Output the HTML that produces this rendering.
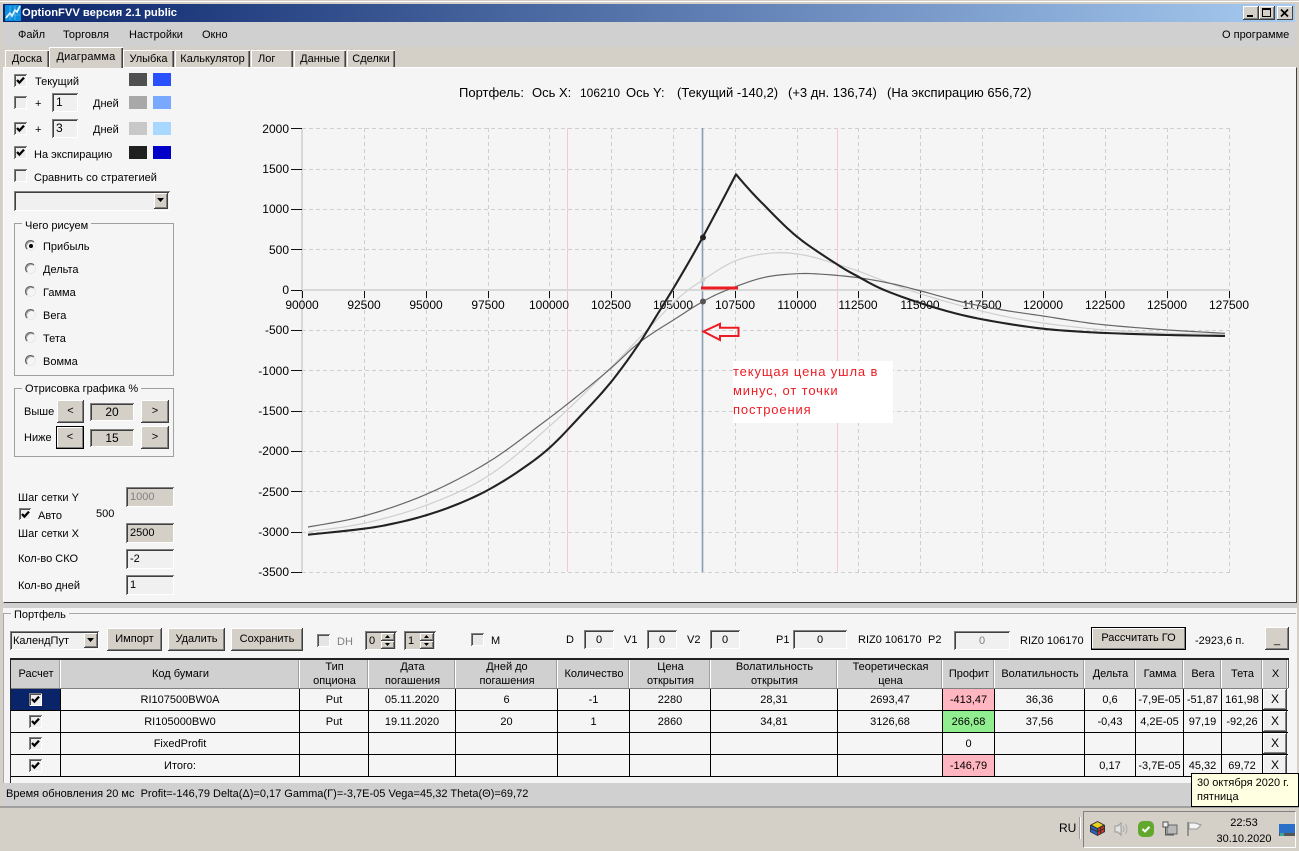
<!DOCTYPE html>
<html lang="ru"><head><meta charset="utf-8"><title>OptionFVV</title>
<style>
html,body{margin:0;padding:0;width:1299px;height:851px;overflow:hidden;background:#d4d0c8}
body{position:relative;font:11px/14px "Liberation Sans","DejaVu Sans",sans-serif;color:#000}
div{box-sizing:border-box}
.a,.t,.b,.s,.c,.r,.sw{position:absolute}
.t{white-space:nowrap;height:14px}
.cn{text-align:center}
.b{background:#d4d0c8;box-shadow:inset -1px -1px #404040,inset 1px 1px #fff,inset -2px -2px #808080;text-align:center;white-space:nowrap}
.d{box-shadow:inset 0 0 0 1px #000,inset -2px -2px #808080,inset 2px 2px #fff}
.s{box-shadow:inset 1px 1px #808080,inset -1px -1px #fff,inset 2px 2px #404040;background:#f0f0f0;text-align:center;white-space:nowrap}
.g{background:#d4d0c8}
.c{width:13px;height:13px;background:#eeeeee;box-shadow:inset 1px 1px #808080,inset -1px -1px #fff,inset 2px 2px #505050}
.c svg{position:absolute;left:2px;top:2px}
.r{width:11px;height:11px;left:25px;border-radius:50%;background:#f5f5f5;border:1px solid;border-color:#606060 #e8e8e8 #e8e8e8 #606060;box-shadow:inset 1px 1px #a0a0a0}
.sw{width:18px;height:13px}
.gb{position:absolute;border:1px solid #a0a0a0}
.lg{position:absolute;background:#f5f5f5;padding:0 3px;height:14px;white-space:nowrap}
.tab{position:absolute;top:50px;height:17px;background:#d4d0c8;text-align:center;line-height:19px;box-shadow:inset 1px 1px #fff,inset -1px 0 #404040,inset -2px 0 #808080;white-space:nowrap}
table{position:absolute;left:11px;top:660px;border-collapse:separate;border-spacing:0;table-layout:fixed;width:1277px;background:#f5f5f5}
th{font-weight:normal;background:#d0d0d0;height:29px;padding:1px 0 0;line-height:13.5px;border-bottom:1px solid #808080;box-shadow:inset -1px 0 #fff,inset -2px 0 #a0a0a0;box-sizing:border-box}
td{height:22px;padding:1px 0 0;text-align:center;border-right:1px solid #000;border-bottom:1px solid #000;box-sizing:border-box;white-space:nowrap;overflow:hidden}
.p{background:#ffb6c1}.e{background:#90ee90}
.cl{font:13px/14px "Liberation Sans",sans-serif}
.x{font-size:12px;line-height:21px;background:#f0f0f0}
</style></head>
<body>
<svg width="0" height="0" style="position:absolute"><defs><symbol id="ck" viewBox="0 0 9 9"><path d="M1 4 L3.4 6.6 L8 1.6" fill="none" stroke="#000" stroke-width="2.3"/></symbol></defs></svg>

<!-- window frame -->
<div class="a" style="left:0;top:1px;width:1299px;height:1px;background:#fff"></div>
<div class="a" style="left:3px;top:4px;width:1292px;height:18px;background:linear-gradient(90deg,#0a246a,#a6caf0)"></div>
<svg class="a" style="left:5px;top:5px" width="16" height="16"><rect width="16" height="16" fill="#0a8ee0"/><path d="M1 13 L5 8 L7 11 L10 5 L12 7 L15 1" fill="none" stroke="#fff" stroke-width="1.6"/><path d="M1 10H15M5 1V15M10 1V15" stroke="#7fc8f0" stroke-width=".6"/></svg>
<div class="t" style="left:22px;top:6px;color:#fff;font-weight:bold;font-size:11.2px">OptionFVV версия 2.1 public</div>
<div class="b" style="left:1243px;top:6px;width:16px;height:14px"><div class="a" style="left:4px;top:9px;width:6px;height:2px;background:#000"></div></div>
<div class="b" style="left:1259px;top:6px;width:16px;height:14px"><div class="a" style="left:3px;top:2px;width:9px;height:9px;border:1px solid #000;border-top-width:2px"></div></div>
<svg class="a" style="left:1277px;top:6px;box-shadow:inset -1px -1px #404040,inset 1px 1px #fff;background:#d4d0c8" width="16" height="14"><path d="M4 3.5L11 10.5M11 3.5L4 10.5" stroke="#000" stroke-width="1.7"/></svg>

<!-- menu -->
<div class="a" style="left:3px;top:22px;width:1292px;height:25px;background:#d0d0d0"></div>
<div class="t" style="left:18px;top:28px">Файл</div>
<div class="t" style="left:63px;top:28px">Торговля</div>
<div class="t" style="left:129px;top:28px">Настройки</div>
<div class="t" style="left:202px;top:28px">Окно</div>
<div class="t" style="left:1222px;top:28px">О программе</div>

<!-- tabs -->
<div class="tab" style="left:5px;width:44px">Доска</div>
<div class="tab" style="left:123px;width:51px">Улыбка</div>
<div class="tab" style="left:175px;width:75px">Калькулятор</div>
<div class="tab" style="left:251px;width:42px;text-align:left;padding-left:7px">Лог</div>
<div class="tab" style="left:294px;width:52px">Данные</div>
<div class="tab" style="left:347px;width:48px">Сделки</div>

<!-- chart panel -->
<div class="a" style="left:3px;top:67px;width:1294px;height:536px;background:#f5f5f5;border-top:1px solid #fff;border-left:1px solid #fff;border-right:1px solid #404040;border-bottom:1px solid #404040"></div>
<div class="tab" style="left:49px;top:47px;width:74px;height:21px;line-height:21px;background:#d4d0c8;letter-spacing:.2px">Диаграмма</div>
<div class="a" style="left:3px;top:603px;width:1294px;height:5px;background:#d0d0d0"></div>

<!-- left controls -->
<div class="c" style="left:14px;top:74px"><svg width="9" height="9"><use href="#ck"/></svg></div>
<div class="t" style="left:35px;top:75px">Текущий</div>
<div class="sw" style="left:129px;top:73px;background:#505050"></div><div class="sw" style="left:153px;top:73px;background:#2850ff"></div>

<div class="c" style="left:14px;top:96px"></div>
<div class="t" style="left:35px;top:97px">+</div>
<div class="s" style="left:52px;top:93px;width:26px;height:19px;text-align:left;padding:3px 0 0 4px;line-height:13px;font-size:12px">1</div>
<div class="t" style="left:93px;top:97px">Дней</div>
<div class="sw" style="left:129px;top:96px;background:#a8a8a8"></div><div class="sw" style="left:153px;top:96px;background:#78a8ff"></div>

<div class="c" style="left:14px;top:122px"><svg width="9" height="9"><use href="#ck"/></svg></div>
<div class="t" style="left:35px;top:123px">+</div>
<div class="s" style="left:52px;top:119px;width:26px;height:19px;text-align:left;padding:3px 0 0 4px;line-height:13px;font-size:12px">3</div>
<div class="t" style="left:93px;top:123px">Дней</div>
<div class="sw" style="left:129px;top:122px;background:#c8c8c8"></div><div class="sw" style="left:153px;top:122px;background:#a8d8ff"></div>

<div class="c" style="left:14px;top:146px"><svg width="9" height="9"><use href="#ck"/></svg></div>
<div class="t" style="left:34px;top:148px">На экспирацию</div>
<div class="sw" style="left:129px;top:146px;background:#202020"></div><div class="sw" style="left:153px;top:146px;background:#0000c8"></div>

<div class="c" style="left:14px;top:169px"></div>
<div class="t" style="left:34px;top:171px">Сравнить со стратегией</div>

<div class="s" style="left:14px;top:191px;width:156px;height:20px"></div>
<div class="b" style="left:154px;top:193px;width:14px;height:16px"><svg class="a" style="left:3px;top:5px" width="8" height="5"><path d="M0 0H7L3.5 4Z" fill="#000"/></svg></div>

<div class="gb" style="left:14px;top:223px;width:160px;height:153px"></div>
<div class="lg" style="left:22px;top:219px">Чего рисуем</div>
<div class="r" style="top:240px"><div class="a" style="left:3px;top:3px;width:4px;height:4px;border-radius:50%;background:#000"></div></div><div class="t" style="left:43px;top:240px">Прибыль</div>
<div class="r" style="top:263px"></div><div class="t" style="left:43px;top:263px">Дельта</div>
<div class="r" style="top:286px"></div><div class="t" style="left:43px;top:286px">Гамма</div>
<div class="r" style="top:309px"></div><div class="t" style="left:43px;top:309px">Вега</div>
<div class="r" style="top:332px"></div><div class="t" style="left:43px;top:332px">Тета</div>
<div class="r" style="top:355px"></div><div class="t" style="left:43px;top:355px">Вомма</div>

<div class="gb" style="left:14px;top:388px;width:160px;height:69px"></div>
<div class="lg" style="left:22px;top:382px">Отрисовка графика %</div>
<div class="t" style="left:24px;top:405px">Выше</div>
<div class="b" style="left:57px;top:400px;width:27px;height:23px;line-height:23px">&lt;</div>
<div class="s g" style="left:90px;top:403px;width:44px;height:18px;line-height:18px;font-size:12px">20</div>
<div class="b" style="left:141px;top:400px;width:28px;height:23px;line-height:23px">&gt;</div>
<div class="t" style="left:24px;top:431px">Ниже</div>
<div class="b d" style="left:56px;top:426px;width:28px;height:23px;line-height:23px">&lt;</div>
<div class="s g" style="left:90px;top:429px;width:44px;height:18px;line-height:18px;font-size:12px">15</div>
<div class="b" style="left:141px;top:426px;width:28px;height:23px;line-height:23px">&gt;</div>

<div class="t" style="left:18px;top:491px">Шаг сетки Y</div>
<div class="s g" style="left:126px;top:487px;width:48px;height:20px;text-align:left;padding:3px 0 0 4px;line-height:14px;color:#808080">1000</div>
<div class="c" style="left:19px;top:508px;width:12px;height:12px"><svg width="9" height="9"><use href="#ck"/></svg></div>
<div class="t" style="left:38px;top:509px">Авто</div>
<div class="t" style="left:96px;top:507px">500</div>
<div class="t" style="left:18px;top:527px">Шаг сетки X</div>
<div class="s g" style="left:126px;top:523px;width:48px;height:20px;text-align:left;padding:3px 0 0 4px;line-height:14px">2500</div>
<div class="t" style="left:18px;top:552px">Кол-во СКО</div>
<div class="s" style="left:126px;top:549px;width:48px;height:20px;text-align:left;padding:3px 0 0 4px;line-height:14px">-2</div>
<div class="t" style="left:18px;top:579px">Кол-во дней</div>
<div class="s" style="left:126px;top:575px;width:48px;height:20px;text-align:left;padding:3px 0 0 4px;line-height:14px">1</div>

<!-- chart -->
<div class="t cl" style="left:459px;top:86px">Портфель:</div>
<div class="t cl" style="left:532px;top:86px">Ось X:</div>
<div class="t cl" style="left:580px;top:86px;font-size:12px">106210</div>
<div class="t cl" style="left:626px;top:86px">Ось Y:</div>
<div class="t cl" style="left:677px;top:86px">(Текущий -140,2)</div>
<div class="t cl" style="left:788px;top:86px">(+3 дн. 136,74)</div>
<div class="t cl" style="left:887px;top:86px">(На экспирацию 656,72)</div>

<svg class="a" style="left:0;top:0" width="1299" height="600">
<g stroke="#cfcfcf" stroke-width="1" stroke-dasharray="4 3" fill="none">
<path d="M302 128.5H1230M302 169.5H1230M302 209.5H1230M302 249.5H1230M302 330.5H1230M302 370.5H1230M302 411.5H1230M302 451.5H1230M302 491.5H1230M302 532.5H1230M302 572.5H1230"/>
<path d="M364.5 128V572M426.5 128V572M488.5 128V572M549.5 128V572M611.5 128V572M673.5 128V572M735.5 128V572M797.5 128V572M858.5 128V572M920.5 128V572M982.5 128V572M1043.5 128V572M1105.5 128V572M1167.5 128V572M1229.5 128V572"/>
</g>
<path d="M567.5 128V572M837.5 128V572" stroke="#f7c6d0" stroke-width="1"/>
<path d="M702.5 128V572" stroke="#8a9cb2" stroke-width="1.6"/>
<path d="M302 128V572" stroke="#d8d8d8" stroke-width="2"/>
<path d="M302 290H1230" stroke="#d8d8d8" stroke-width="2"/>
<path d="M291 128.5H302M291 169.5H302M291 209.5H302M291 249.5H302M291 290.5H302M291 330.5H302M291 370.5H302M291 411.5H302M291 451.5H302M291 491.5H302M291 532.5H302M291 572.5H302" stroke="#111" stroke-width="1"/>
<path d="M302.5 291V298M364.5 291V298M426.5 291V298M488.5 291V298M549.5 291V298M611.5 291V298M673.5 291V298M735.5 291V298M797.5 291V298M858.5 291V298M920.5 291V298M982.5 291V298M1043.5 291V298M1105.5 291V298M1167.5 291V298M1229.5 291V298" stroke="#111" stroke-width="1"/>
<g font-family="Liberation Sans, sans-serif" font-size="12" text-anchor="middle" fill="#000">
<text x="302" y="309">90000</text><text x="364" y="309">92500</text><text x="426" y="309">95000</text><text x="488" y="309">97500</text><text x="549" y="309">100000</text><text x="611" y="309">102500</text><text x="673" y="309">105000</text><text x="735" y="309">107500</text><text x="797" y="309">110000</text><text x="858" y="309">112500</text><text x="920" y="309">115000</text><text x="982" y="309">117500</text><text x="1043" y="309">120000</text><text x="1105" y="309">122500</text><text x="1167" y="309">125000</text><text x="1229" y="309">127500</text>
</g>
<g font-family="Liberation Sans, sans-serif" font-size="12" text-anchor="end" fill="#000">
<text x="289" y="133">2000</text><text x="289" y="173">1500</text><text x="289" y="213">1000</text><text x="289" y="254">500</text><text x="289" y="294">0</text><text x="289" y="334">-500</text><text x="289" y="375">-1000</text><text x="289" y="415">-1500</text><text x="289" y="455">-2000</text><text x="289" y="496">-2500</text><text x="289" y="536">-3000</text><text x="289" y="576">-3500</text>
</g>
<g fill="none" stroke-linejoin="round">
<polyline stroke="#cfcfcf" stroke-width="1.2" points="308,531.7 364,523.3 427,505 488,476 549,426.7 610,368.3 647,330 680,296.7 703,280 730,263.3 753,255.7 780,252.7 807,255.7 837,264.3 858,271 890,283.3 921,294 962,306 1003,316 1043,323 1075,327 1106,330 1168,333.3 1225,334.3"/>
<polyline stroke="#666" stroke-width="1.2" points="308,527 364,516 427,494 488,462.3 540,425 575,398 610,369 640,342 675,319 703,301.5 727,290 763,277.7 797,273.7 823,274.3 858,277.7 890,283.3 921,291 962,302 1003,310 1043,316 1075,321 1106,325 1168,330 1225,333.3"/>
<polyline stroke="#222" stroke-width="2.1" points="308,534.7 364,528.7 396,523 427,515 458,504 488,490 519,471 549,448.3 580,416.5 610,383.3 637,346.7 657,315 673,289 690,260 703,236.7 720,205 736,174.3 736,174.3 746.7,186.7 763.3,204.3 797,236.7 837,264.3 858.3,276.7 883,289.5 921,303.3 962,315 1003,323 1043,328.7 1075,331.3 1106,333 1168,335 1225,336"/>
</g>
<circle cx="703" cy="237.5" r="3" fill="#222"/>
<circle cx="703" cy="279.5" r="2.5" fill="#cfcfcf"/>
<circle cx="703" cy="301.5" r="3" fill="#555"/>
<path d="M701 288H738" stroke="#ed1c24" stroke-width="3"/>
<path d="M703.5 331.5L720 323.8V327.8H738.5V336H720V340Z" fill="none" stroke="#ed1c24" stroke-width="2"/>
</svg>
<script>
document.querySelectorAll('polyline').forEach(function(pl){
var p=pl.getAttribute('points').trim().split(/\s+/).map(function(s){return s.split(',').map(Number)}),o=[];
for(var i=0;i<p.length-1;i++){var a=p[Math.max(i-1,0)],b=p[i],c=p[i+1],d=p[Math.min(i+2,p.length-1)];
if(b[0]===c[0]&&b[1]===c[1])continue;
for(var k=0;k<8;k++){var t=k/8,t2=t*t,t3=t2*t,q=[0,1].map(function(j){return (0.5*(2*b[j]+(c[j]-a[j])*t+(2*a[j]-5*b[j]+4*c[j]-d[j])*t2+(3*b[j]-a[j]-3*c[j]+d[j])*t3)).toFixed(2)});o.push(q.join(','))}}
o.push(p[p.length-1].join(','));pl.setAttribute('points',o.join(' '))});
</script>

<div class="a" style="left:733px;top:361px;width:160px;height:62px;background:#fff"></div>
<div class="t" style="left:733px;top:365px;color:#ed1c24;font-size:13px;letter-spacing:.87px">текущая цена ушла в</div>
<div class="t" style="left:733px;top:384px;color:#ed1c24;font-size:13px;letter-spacing:.87px">минус, от точки</div>
<div class="t" style="left:733px;top:403px;color:#ed1c24;font-size:13px;letter-spacing:.87px">построения</div>

<!-- portfolio -->
<div class="a" style="left:3px;top:608px;width:1294px;height:175px;background:#f5f5f5"></div>
<div class="a" style="left:3px;top:613px;width:1293px;height:1px;background:#a8a8a8"></div>
<div class="a" style="left:3px;top:613px;width:1px;height:170px;background:#a8a8a8"></div>
<div class="lg" style="left:11px;top:608px;padding:0 3px">Портфель</div>

<div class="s" style="left:10px;top:631px;width:89px;height:19px;text-align:left;padding:4px 0 0 3px;line-height:13px">КалендПут</div>
<div class="b" style="left:84px;top:633px;width:14px;height:15px"><svg class="a" style="left:3px;top:5px" width="8" height="5"><path d="M0 0H7L3.5 4Z" fill="#000"/></svg></div>
<div class="b" style="left:107px;top:628px;width:55px;height:23px;line-height:23px">Импорт</div>
<div class="b" style="left:168px;top:628px;width:57px;height:23px;line-height:23px">Удалить</div>
<div class="b" style="left:231px;top:628px;width:72px;height:23px;line-height:23px">Сохранить</div>
<div class="c" style="left:317px;top:634px;background:#e4e4e4"></div>
<div class="t" style="left:337px;top:635px;color:#808080">DH</div>
<div class="s g" style="left:365px;top:631px;width:32px;height:19px;text-align:left;padding:4px 0 0 4px;line-height:13px">0</div>
<div class="b" style="left:381px;top:633px;width:14px;height:8px"><svg class="a" style="left:4px;top:2px" width="6" height="4"><path d="M0 3H5L2.5 0Z"/></svg></div>
<div class="b" style="left:381px;top:641px;width:14px;height:8px"><svg class="a" style="left:4px;top:2px" width="6" height="4"><path d="M0 0H5L2.5 3Z"/></svg></div>
<div class="s g" style="left:404px;top:631px;width:32px;height:19px;text-align:left;padding:4px 0 0 4px;line-height:13px">1</div>
<div class="b" style="left:420px;top:633px;width:14px;height:8px"><svg class="a" style="left:4px;top:2px" width="6" height="4"><path d="M0 3H5L2.5 0Z"/></svg></div>
<div class="b" style="left:420px;top:641px;width:14px;height:8px"><svg class="a" style="left:4px;top:2px" width="6" height="4"><path d="M0 0H5L2.5 3Z"/></svg></div>
<div class="c" style="left:471px;top:633px;background:#e8e8e8"></div>
<div class="t" style="left:491px;top:634px">M</div>
<div class="t" style="left:566px;top:633px">D</div>
<div class="s" style="left:584px;top:630px;width:30px;height:19px;line-height:20px">0</div>
<div class="t" style="left:624px;top:633px">V1</div>
<div class="s" style="left:647px;top:630px;width:30px;height:19px;line-height:20px">0</div>
<div class="t" style="left:687px;top:633px">V2</div>
<div class="s" style="left:710px;top:630px;width:30px;height:19px;line-height:20px">0</div>
<div class="t" style="left:776px;top:633px">P1</div>
<div class="s" style="left:793px;top:630px;width:54px;height:19px;line-height:20px">0</div>
<div class="t" style="left:858px;top:633px">RIZ0 106170</div>
<div class="t" style="left:928px;top:633px">P2</div>
<div class="s" style="left:954px;top:631px;width:56px;height:19px;line-height:20px;color:#808080">0</div>
<div class="t" style="left:1020px;top:634px">RIZ0 106170</div>
<div class="b d" style="left:1091px;top:627px;width:95px;height:23px;line-height:23px">Рассчитать ГО</div>
<div class="t" style="left:1195px;top:634px">-2923,6 п.</div>
<div class="b" style="left:1265px;top:627px;width:24px;height:23px;line-height:26px">_</div>

<!-- table -->
<div class="a" style="left:10px;top:658px;width:1279px;height:2px;background:#222"></div>
<div class="a" style="left:10px;top:658px;width:1px;height:125px;background:#222"></div>
<table>
<colgroup><col style="width:50px"><col style="width:239px"><col style="width:69px"><col style="width:87px"><col style="width:102px"><col style="width:72px"><col style="width:81px"><col style="width:127px"><col style="width:105px"><col style="width:52px"><col style="width:90px"><col style="width:51px"><col style="width:48px"><col style="width:38px"><col style="width:41px"><col style="width:25px"></colgroup>
<tr><th>Расчет</th><th>Код бумаги</th><th>Тип<br>опциона</th><th>Дата<br>погашения</th><th>Дней до<br>погашения</th><th>Количество</th><th>Цена<br>открытия</th><th>Волатильность<br>открытия</th><th>Теоретическая<br>цена</th><th>Профит</th><th>Волатильность</th><th>Дельта</th><th>Гамма</th><th>Вега</th><th>Тета</th><th>X</th></tr>
<tr><td style="background:#0a246a"></td><td>RI107500BW0A</td><td>Put</td><td>05.11.2020</td><td>6</td><td>-1</td><td>2280</td><td>28,31</td><td>2693,47</td><td class="p">-413,47</td><td>36,36</td><td>0,6</td><td>-7,9E-05</td><td>-51,87</td><td>161,98</td><td style="border-right:0"></td></tr>
<tr><td></td><td>RI105000BW0</td><td>Put</td><td>19.11.2020</td><td>20</td><td>1</td><td>2860</td><td>34,81</td><td>3126,68</td><td class="e">266,68</td><td>37,56</td><td>-0,43</td><td>4,2E-05</td><td>97,19</td><td>-92,26</td><td style="border-right:0"></td></tr>
<tr><td></td><td>FixedProfit</td><td></td><td></td><td></td><td></td><td></td><td></td><td></td><td>0</td><td></td><td></td><td></td><td></td><td></td><td style="border-right:0"></td></tr>
<tr><td></td><td>Итого:</td><td></td><td></td><td></td><td></td><td></td><td></td><td></td><td class="p">-146,79</td><td></td><td>0,17</td><td>-3,7E-05</td><td>45,32</td><td>69,72</td><td style="border-right:0"></td></tr>
</table>
<div class="a" style="left:1288px;top:660px;width:1px;height:28px;background:#606060"></div>
<div class="c" style="left:29px;top:693px"><svg width="9" height="9"><use href="#ck"/></svg></div>
<div class="c" style="left:29px;top:715px"><svg width="9" height="9"><use href="#ck"/></svg></div>
<div class="c" style="left:29px;top:737px"><svg width="9" height="9"><use href="#ck"/></svg></div>
<div class="c" style="left:29px;top:759px"><svg width="9" height="9"><use href="#ck"/></svg></div>
<div class="b x" style="left:1263px;top:689px;width:24px;height:21px">X</div>
<div class="b x" style="left:1263px;top:711px;width:24px;height:21px">X</div>
<div class="b x" style="left:1263px;top:733px;width:24px;height:21px">X</div>
<div class="b x" style="left:1263px;top:755px;width:24px;height:21px">X</div>

<!-- status bar -->
<div class="a" style="left:3px;top:783px;width:1293px;height:23px;background:#d0d0d0"></div>
<div class="t" style="left:6px;top:787px">Время обновления 20 мс &nbsp;Profit=-146,79 Delta(Δ)=0,17 Gamma(Γ)=-3,7E-05 Vega=45,32 Theta(Θ)=69,72</div>
<div class="a" style="left:0;top:806px;width:1299px;height:2px;background:#a0a0a0"></div>

<!-- taskbar -->
<div class="t" style="left:1059px;top:821px;font-size:12px">RU</div>
<div class="a" style="left:1079px;top:817px;width:2px;height:22px;background:#a0a0a0;border-right:1px solid #fff"></div>
<div class="a" style="left:1083px;top:811px;width:213px;height:37px;border:1px solid;border-color:#808080 #fff #fff #808080"></div>
<svg class="a" style="left:1089px;top:820px" width="17" height="17"><path d="M8.5 1L16 5V12L8.5 16L1 12V5Z" fill="#333"/><path d="M8.5 2L14 5L8.5 8L3 5Z" fill="#e8d020"/><path d="M2 6L8 9V15L2 11.5Z" fill="#2a62c8"/><path d="M9 9L15 6V11.5L9 15Z" fill="#d03020"/><path d="M2 8.5L8 11.5" stroke="#333"/><path d="M9 11.5L15 8.5M11.5 8V14" stroke="#333"/></svg>
<svg class="a" style="left:1113px;top:821px" width="17" height="16"><path d="M2 5H5L8 2V14L5 11H2Z" fill="#e4e4e4" stroke="#999"/><path d="M10 5Q12 8 10 11M12.5 3Q15.5 8 12.5 13" fill="none" stroke="#aaa"/></svg>
<svg class="a" style="left:1138px;top:821px" width="16" height="16"><rect width="16" height="16" rx="5" fill="#62a82c"/><path d="M4.5 8L7 10.5L11.5 5.8" fill="none" stroke="#fff" stroke-width="2"/></svg>
<svg class="a" style="left:1162px;top:821px" width="16" height="16"><rect x="5" y="4" width="10" height="9" fill="#b8b8b8" stroke="#666"/><path d="M1 1H6V6H1Z" fill="#eee" stroke="#555"/><path d="M3.5 6V14H12" fill="none" stroke="#555"/></svg>
<svg class="a" style="left:1186px;top:821px" width="16" height="16"><path d="M2 1V15" stroke="#777" stroke-width="1.4"/><path d="M3 2H9L15 4L11 8H3Z" fill="#f4f4f4" stroke="#999"/></svg>
<div class="t cn" style="left:1214px;top:816px;width:60px">22:53</div>
<div class="t cn" style="left:1214px;top:832px;width:60px">30.10.2020</div>
<svg class="a" style="left:1279px;top:824px" width="16" height="13"><rect width="16" height="9" fill="#2a70c8"/><rect y="9" width="16" height="3" fill="#555"/><rect x="1" y="9" width="4" height="3" fill="#3a9"/></svg>

<!-- tooltip -->
<div class="a" style="left:1191px;top:773px;width:108px;height:34px;background:#ffffe1;border:1px solid #000"></div>
<div class="t" style="left:1197px;top:776px">30 октября 2020 г.</div>
<div class="t" style="left:1197px;top:790px">пятница</div>
</body></html>
